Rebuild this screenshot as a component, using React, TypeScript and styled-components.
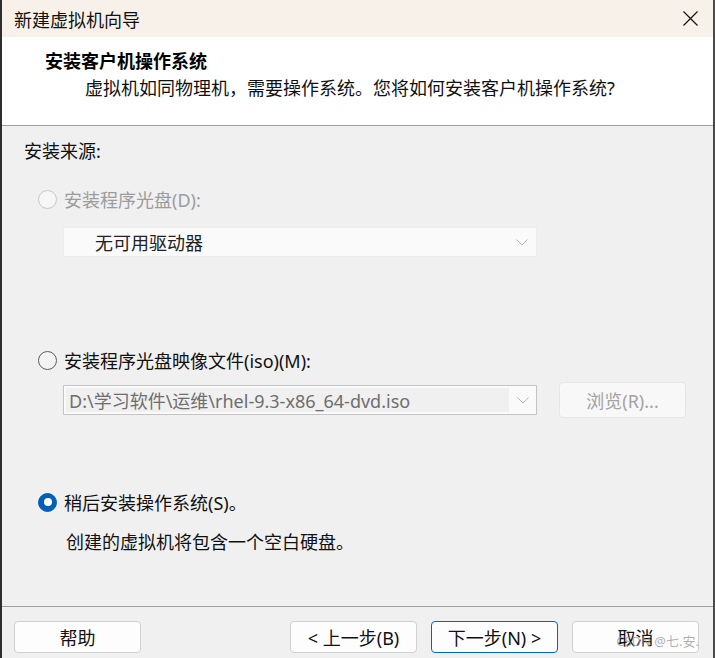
import React from 'react';
import styled, { createGlobalStyle } from 'styled-components';

const GlobalStyle = createGlobalStyle`
    html, body {
        margin: 0;
        padding: 0;
        background: #ffffff;
    }
    body {
        font-family: "Noto Sans", "Noto Sans CJK SC", sans-serif;
        -webkit-font-smoothing: antialiased;
    }
`;

const Window = styled.div`
    position: relative;
    width: 715px;
    height: 658px;
    box-sizing: border-box;
    display: flex;
    flex-direction: column;
    border-left: 2px solid #2e2e2e;
    border-right: 2px solid #4a4a4a;
    background: #f0f0f0;
    overflow: hidden;
`;

const TitleBar = styled.div`
    height: 37px;
    flex: none;
    display: flex;
    align-items: center;
    justify-content: space-between;
    background: #f8f1ea;
    padding: 0 15px 0 12px;
    font-size: 18px;
    color: #111;
`;

const CloseButton = styled.svg`
    width: 15px;
    height: 15px;
`;

const Header = styled.div`
    height: 89px;
    flex: none;
    box-sizing: border-box;
    background: #ffffff;
    border-bottom: 1px solid #a0a0a0;
    padding: 12px 0 0 43px;
`;

const HeaderTitle = styled.div`
    font-size: 18px;
    font-weight: 700;
    line-height: 24px;
    color: #000;
`;

const HeaderSub = styled.div`
    margin: 3px 0 0 40px;
    font-size: 18px;
    line-height: 24px;
    color: #111;
`;

const Body = styled.div`
    flex: 1;
    display: flex;
    flex-direction: column;
    padding: 13px 0 0 22px;
`;

const SectionLabel = styled.div`
    font-size: 18px;
    line-height: 24px;
    color: #111;
`;

const RadioRow = styled.div<{ $gap: number; $disabled?: boolean }>`
    margin-top: ${p => p.$gap}px;
    margin-left: 14px;
    height: 24px;
    display: flex;
    align-items: center;
    gap: 7px;
    font-size: 18px;
    color: ${p => (p.$disabled ? '#9c9c9c' : '#111')};
`;

const RadioDot = styled.span<{ $checked?: boolean; $disabled?: boolean }>`
    width: 19px;
    height: 19px;
    box-sizing: border-box;
    border-radius: 50%;
    flex: none;
    display: flex;
    align-items: center;
    justify-content: center;
    border: 1px solid ${p => (p.$checked ? '#005fb8' : p.$disabled ? '#c8c8c8' : '#5e5e5e')};
    background: ${p => (p.$checked ? '#005fb8' : p.$disabled ? '#f6f6f6' : '#f3f3f3')};

    &::after {
        content: '';
        display: ${p => (p.$checked ? 'block' : 'none')};
        width: 8px;
        height: 8px;
        border-radius: 50%;
        background: #ffffff;
    }
`;

const Select = styled.div`
    margin: 16px 0 0 39px;
    width: 474px;
    height: 30px;
    box-sizing: border-box;
    display: flex;
    align-items: center;
    justify-content: space-between;
    padding: 0 8px 0 31px;
    background: #fafafa;
    border: 1px solid #ececec;
    font-size: 18px;
    color: #222;
`;

const Chevron = () => (
    <svg width="12" height="7" viewBox="0 0 12 7">
        <path d="M0.5 0.5 L6 6 L11.5 0.5" fill="none" stroke="#b5b5b5" strokeWidth="1" />
    </svg>
);

const FileRow = styled.div`
    margin: 10px 0 0 39px;
    height: 36px;
    display: flex;
    align-items: center;
    gap: 22px;
`;

const Combo = styled.div`
    width: 474px;
    height: 30px;
    box-sizing: border-box;
    display: flex;
    border: 1px solid #c4c4c4;
    background: #fafafa;
`;

const ComboInput = styled.div`
    flex: 1;
    display: flex;
    align-items: center;
    padding-left: 3px;
    margin: 2px 0 2px 2px;
    background: #f0f0f0;
    font-size: 18px;
    color: #6e6e6e;
    white-space: nowrap;
    overflow: hidden;
`;

const ComboArrow = styled.div`
    width: 27px;
    display: flex;
    align-items: center;
    justify-content: center;
`;

const Button = styled.button<{ $primary?: boolean; $disabled?: boolean }>`
    width: 127px;
    height: ${p => (p.$disabled ? 36 : 32)}px;
    box-sizing: border-box;
    border-radius: 4px;
    border: 1px solid ${p => (p.$primary ? '#0067c0' : p.$disabled ? '#e6e6e6' : '#d0d0d0')};
    background: ${p => (p.$disabled ? '#f8f8f8' : '#fdfdfd')};
    color: ${p => (p.$disabled ? '#a3a3a3' : '#111')};
    font-family: "Noto Sans", "Noto Sans CJK SC", sans-serif;
    font-size: 18px;
    padding: 0;
    display: flex;
    align-items: center;
    justify-content: center;
`;

const Note = styled.div`
    margin: 16px 0 0 42px;
    font-size: 18px;
    line-height: 24px;
    color: #111;
`;

const Footer = styled.div`
    height: 52px;
    flex: none;
    box-sizing: border-box;
    border-top: 1px solid #a0a0a0;
    display: flex;
    align-items: flex-start;
    padding: 14px 14px 0 12px;
`;

const Spacer = styled.div`
    flex: 1;
`;

const FooterGroup = styled.div`
    display: flex;
    gap: 14px;
`;

const Watermark = styled.div`
    position: absolute;
    right: 14px;
    bottom: 8px;
    font-size: 13px;
    color: rgba(150, 150, 150, 0.75);
    pointer-events: none;
`;

export default function App() {
    return (
        <>
            <GlobalStyle />
            <Window>
                <TitleBar>
                    <span>新建虚拟机向导</span>
                    <CloseButton viewBox="0 0 15 15">
                        <path d="M0.5 0.5 L14.5 14.5 M14.5 0.5 L0.5 14.5" stroke="#111" strokeWidth="1.2" />
                    </CloseButton>
                </TitleBar>
                <Header>
                    <HeaderTitle>安装客户机操作系统</HeaderTitle>
                    <HeaderSub>虚拟机如同物理机，需要操作系统。您将如何安装客户机操作系统?</HeaderSub>
                </Header>
                <Body>
                    <SectionLabel>安装来源:</SectionLabel>
                    <RadioRow $gap={24} $disabled>
                        <RadioDot $disabled />
                        安装程序光盘(D):
                    </RadioRow>
                    <Select>
                        <span>无可用驱动器</span>
                        <Chevron />
                    </Select>
                    <RadioRow $gap={91}>
                        <RadioDot />
                        安装程序光盘映像文件(iso)(M):
                    </RadioRow>
                    <FileRow>
                        <Combo>
                            <ComboInput>D:\学习软件\运维\rhel-9.3-x86_64-dvd.iso</ComboInput>
                            <ComboArrow>
                                <Chevron />
                            </ComboArrow>
                        </Combo>
                        <Button $disabled>浏览(R)...</Button>
                    </FileRow>
                    <RadioRow $gap={72}>
                        <RadioDot $checked />
                        稍后安装操作系统(S)。
                    </RadioRow>
                    <Note>创建的虚拟机将包含一个空白硬盘。</Note>
                </Body>
                <Footer>
                    <Button>帮助</Button>
                    <Spacer />
                    <FooterGroup>
                        <Button>&lt; 上一步(B)</Button>
                        <Button $primary>下一步(N) &gt;</Button>
                        <Button>取消</Button>
                    </FooterGroup>
                </Footer>
                <Watermark>CSDN @七.安.</Watermark>
            </Window>
        </>
    );
}
